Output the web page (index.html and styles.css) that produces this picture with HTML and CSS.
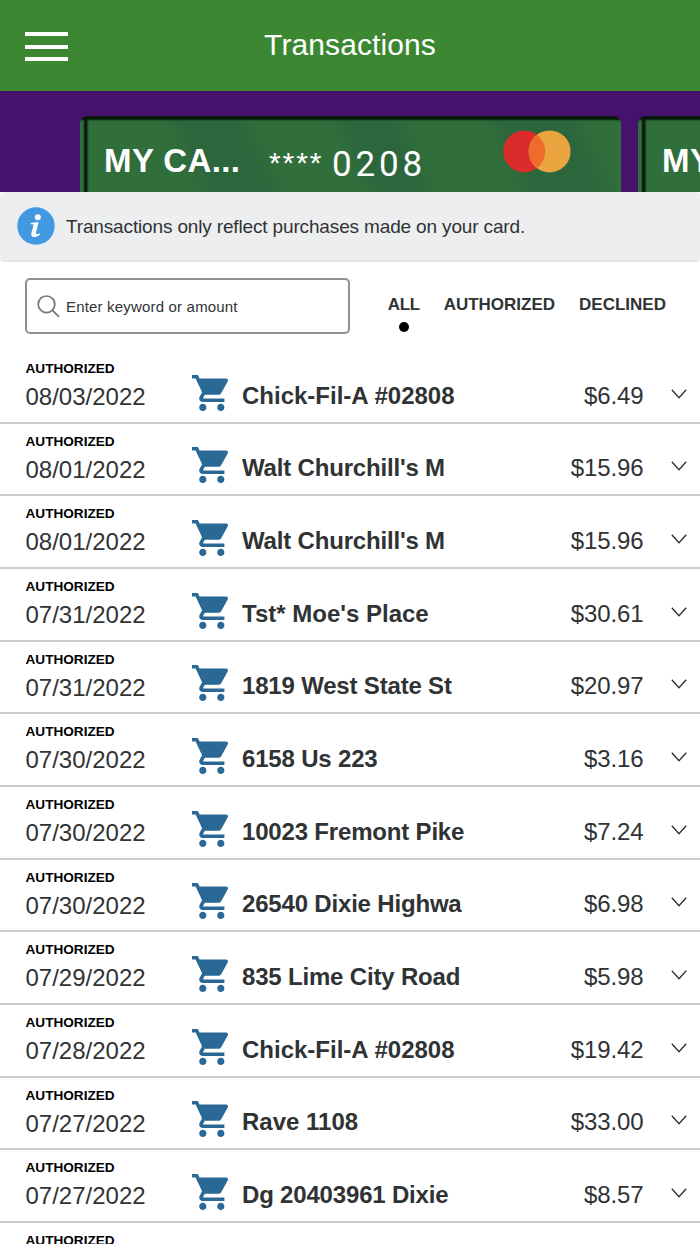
FILE: index.html
```html
<!DOCTYPE html>
<html lang="en">
<head>
<meta charset="utf-8">
<title>Transactions</title>
<link rel="stylesheet" href="styles.css">
</head>
<body>
<svg class="sprite" aria-hidden="true">
  <symbol id="cart" viewBox="1 2 20 20">
    <path d="M7 18c-1.1 0-1.99.9-1.99 2S5.9 22 7 22s2-.9 2-2-.9-2-2-2zM1 2v2h2l3.6 7.59-1.35 2.45c-.16.28-.25.61-.25.96 0 1.1.9 2 2 2h12v-2H7.42c-.14 0-.25-.11-.25-.25l.03-.12.9-1.63h7.45c.75 0 1.41-.41 1.75-1.03l3.58-6.49c.08-.14.12-.31.12-.48 0-.55-.45-1-1-1H5.21l-.94-2H1zm16 16c-1.1 0-1.99.9-1.99 2s.89 2 1.99 2 2-.9 2-2-.9-2-2-2z"/>
  </symbol>
  <symbol id="chevron" viewBox="0 0 16 10"><path d="M.8 .8L8 8.8L15.2 .8"/></symbol>
</svg>
<header class="header">
  <button class="menu" aria-label="Menu"><span></span><span></span><span></span></button>
  <h1 class="title">Transactions</h1>
</header>
<section class="carousel">
  <div class="card">
    <span class="card-name">MY CA...</span>
    <span class="stars">****</span>
    <span class="digits">0208</span>
    <svg class="brand" viewBox="0 0 68 43"><circle cx="21.2" cy="21.4" r="21" fill="#da2c2b"/><circle cx="46.6" cy="21.4" r="21" fill="#eba540"/><path d="M33.9 4.7A21 21 0 0 1 33.9 38.1A21 21 0 0 1 33.9 4.7" fill="#ee6b2d"/></svg>
  </div>
  <div class="card"><span class="card-name">MY CA...</span></div>
</section>
<section class="notice">
  <svg class="info" viewBox="0 0 38 38"><circle cx="19" cy="19" r="18.7" fill="#4299e1"/><circle cx="20.8" cy="10.2" r="3" fill="#fff"/><path d="M13.6 16.2C16 15.6 18 15.2 21.6 15.2L19 25.6C18.6 27.4 19.8 27.5 22.8 26.2L22.5 28C20.6 29.5 18.7 30 17 30C14.5 30 13.8 28.3 14.5 25.7L16.5 18.3C16.8 17.3 15.5 17.3 13.6 17.4Z" fill="#fff"/></svg>
  <span class="notice-text">Transactions only reflect purchases made on your card.</span>
</section>
<section class="filters">
  <div class="search">
    <svg class="lens" viewBox="0 0 24 24"><circle cx="9.5" cy="10.3" r="8.3"/><path d="M15.5 16.3L22 22.8"/></svg>
    <span>Enter keyword or amount</span>
  </div>
  <nav class="tabs"><a class="tab active">ALL</a><a class="tab">AUTHORIZED</a><a class="tab">DECLINED</a></nav>
</section>
<main class="list">
  <article class="row"><div class="when"><b>AUTHORIZED</b><time>08/03/2022</time></div><svg class="cart"><use href="#cart"/></svg><span class="name">Chick-Fil-A #02808</span><span class="amount">$6.49</span><svg class="chevron"><use href="#chevron"/></svg></article>
  <article class="row"><div class="when"><b>AUTHORIZED</b><time>08/01/2022</time></div><svg class="cart"><use href="#cart"/></svg><span class="name tight">Walt Churchill's M</span><span class="amount">$15.96</span><svg class="chevron"><use href="#chevron"/></svg></article>
  <article class="row"><div class="when"><b>AUTHORIZED</b><time>08/01/2022</time></div><svg class="cart"><use href="#cart"/></svg><span class="name tight">Walt Churchill's M</span><span class="amount">$15.96</span><svg class="chevron"><use href="#chevron"/></svg></article>
  <article class="row"><div class="when"><b>AUTHORIZED</b><time>07/31/2022</time></div><svg class="cart"><use href="#cart"/></svg><span class="name">Tst* Moe's Place</span><span class="amount">$30.61</span><svg class="chevron"><use href="#chevron"/></svg></article>
  <article class="row"><div class="when"><b>AUTHORIZED</b><time>07/31/2022</time></div><svg class="cart"><use href="#cart"/></svg><span class="name tight">1819 West State St</span><span class="amount">$20.97</span><svg class="chevron"><use href="#chevron"/></svg></article>
  <article class="row"><div class="when"><b>AUTHORIZED</b><time>07/30/2022</time></div><svg class="cart"><use href="#cart"/></svg><span class="name tight">6158 Us 223</span><span class="amount">$3.16</span><svg class="chevron"><use href="#chevron"/></svg></article>
  <article class="row"><div class="when"><b>AUTHORIZED</b><time>07/30/2022</time></div><svg class="cart"><use href="#cart"/></svg><span class="name tight">10023 Fremont Pike</span><span class="amount">$7.24</span><svg class="chevron"><use href="#chevron"/></svg></article>
  <article class="row"><div class="when"><b>AUTHORIZED</b><time>07/30/2022</time></div><svg class="cart"><use href="#cart"/></svg><span class="name tight">26540 Dixie Highwa</span><span class="amount">$6.98</span><svg class="chevron"><use href="#chevron"/></svg></article>
  <article class="row"><div class="when"><b>AUTHORIZED</b><time>07/29/2022</time></div><svg class="cart"><use href="#cart"/></svg><span class="name tight">835 Lime City Road</span><span class="amount">$5.98</span><svg class="chevron"><use href="#chevron"/></svg></article>
  <article class="row"><div class="when"><b>AUTHORIZED</b><time>07/28/2022</time></div><svg class="cart"><use href="#cart"/></svg><span class="name">Chick-Fil-A #02808</span><span class="amount">$19.42</span><svg class="chevron"><use href="#chevron"/></svg></article>
  <article class="row"><div class="when"><b>AUTHORIZED</b><time>07/27/2022</time></div><svg class="cart"><use href="#cart"/></svg><span class="name">Rave 1108</span><span class="amount">$33.00</span><svg class="chevron"><use href="#chevron"/></svg></article>
  <article class="row"><div class="when"><b>AUTHORIZED</b><time>07/27/2022</time></div><svg class="cart"><use href="#cart"/></svg><span class="name tight">Dg 20403961 Dixie</span><span class="amount">$8.57</span><svg class="chevron"><use href="#chevron"/></svg></article>
  <article class="row"><div class="when"><b>AUTHORIZED</b></div></article>
</main>
</body>
</html>
```

FILE: styles.css
```css
* { box-sizing: border-box; }
body { margin: 0; width: 700px; height: 1244px; overflow: hidden; display: flex; flex-direction: column; background: #fff; color: #303334; font-family: "Liberation Sans", Arial, sans-serif; }
.sprite { display: none; }
.header { flex: none; height: 91px; background: #3b8732; display: grid; grid-template-columns: 95px 1fr 95px; align-items: center; }
.menu { width: 43px; height: 29px; margin: 2px 0 0 25px; padding: 0; border: 0; background: none; display: flex; flex-direction: column; justify-content: space-between; }
.menu span { height: 4px; background: #fff; }
.title { margin: 0 0 2px; color: #fff; font-size: 30px; line-height: 36px; font-weight: 400; letter-spacing: .1px; text-align: center; white-space: nowrap; }
.carousel { flex: none; height: 101px; padding: 25px 0 0 80px; background: #47126c; display: flex; gap: 17px; overflow: hidden; }
.card { position: relative; flex: none; width: 541px; height: 110px; padding: 0 0 0 24px; display: flex; align-items: flex-start; color: #fff; white-space: nowrap; border-radius: 8px; overflow: hidden; background: linear-gradient(#06170a 0 3px, transparent 5px), linear-gradient(90deg, #2e6d3c 0 3px, #06150a 5px 6px, transparent 9px), linear-gradient(65deg, #306e3b 0 22%, #2c663c 26% 34%, #306e3b 38% 50%, #2c663c 54% 60%, #306e3b 64% 76%, #2c663c 80% 90%, #306e3b 94%); }
.card-name { width: 165px; margin-top: 26px; font-size: 33px; line-height: 38px; font-weight: 700; letter-spacing: .4px; }
.stars { width: 63px; margin-top: 30px; font-size: 30px; line-height: 34px; letter-spacing: 1.9px; }
.digits { width: 171px; margin-top: 28px; font: 35px/41px Roboto, sans-serif; letter-spacing: 3.8px; }
.brand { width: 68px; height: 43px; margin-top: 14px; }
.notice { flex: none; height: 70px; padding: 0 17px; display: flex; align-items: center; gap: 11px; background: #eceef0; border-bottom: 2px solid #e5e6e7; border-radius: 4px; }
.info { width: 38px; height: 38px; }
.notice-text { padding-top: 1px; font-size: 19px; letter-spacing: -.15px; white-space: nowrap; }
.filters { flex: none; height: 89px; padding: 16px 34px 0 25px; display: flex; justify-content: space-between; }
.search { width: 325px; height: 56px; padding: 0 10px; border: 2px solid #909192; border-radius: 5px; display: flex; align-items: center; gap: 5px; font-size: 15px; letter-spacing: .18px; white-space: nowrap; }
.lens { width: 24px; height: 24px; fill: none; stroke: #777; stroke-width: 1.7; }
.tabs { display: flex; gap: 24px; padding-top: 16px; }
.tab { font-size: 17px; line-height: 22px; font-weight: 700; }
.active { letter-spacing: -.4px; }
.active::after { content: ""; display: block; width: 10px; height: 10px; margin: 6px auto 0; border-radius: 50%; background: #000; }
.list { flex: none; }
.row { height: 72.68px; padding: 10px 13.5px 0 25.5px; border-bottom: 2px solid #cdcdcd; display: grid; grid-template-columns: 166px 36px 1fr auto 16px; align-items: start; }
.when { display: flex; flex-direction: column; }
.when b { color: #000; font-size: 13.6px; line-height: 16px; }
.when time { margin-top: 6px; font-size: 24px; line-height: 28px; }
.cart { width: 36px; height: 36px; margin-top: 13.7px; fill: #2a6896; }
.name { margin: 20.6px 0 0 14.5px; font-size: 24px; line-height: 28px; font-weight: 700; white-space: nowrap; }
.tight { letter-spacing: -.18px; }
.amount { margin: 20.6px 27px 0 0; font-size: 24px; line-height: 28px; letter-spacing: -.1px; }
.chevron { width: 16px; height: 10px; margin-top: 27.5px; fill: none; stroke: #303334; stroke-width: 1.4; }
```
